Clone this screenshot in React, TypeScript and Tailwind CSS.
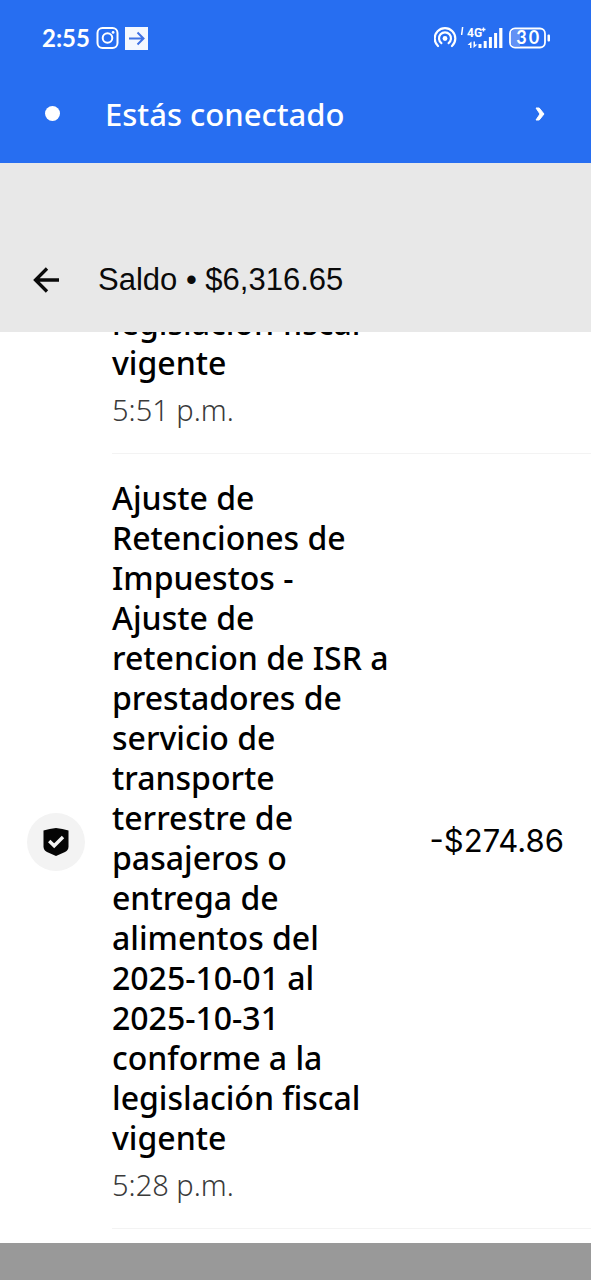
import React from "react";

interface Movement {
  id: string;
  description: string;
  time: string;
  amount?: string;
}

const movements: Movement[] = [
  { id: "a", description: "legislación fiscal\nvigente", time: "5:51 p.m." },
  {
    id: "b",
    description:
      "Ajuste de\nRetenciones de\nImpuestos -\nAjuste de\nretencion de ISR a\nprestadores de\nservicio de\ntransporte\nterrestre de\npasajeros o\nentrega de\nalimentos del\n2025-10-01 al\n2025-10-31\nconforme a la\nlegislación fiscal\nvigente",
    time: "5:28 p.m.",
    amount: "-$274.86",
  },
];

function InstagramIcon() {
  return (
    <svg viewBox="0 0 24 24" className="size-6" fill="none" stroke="currentColor" strokeWidth="2" aria-hidden="true">
      <rect x="1.5" y="2" width="20" height="20" rx="5" />
      <circle cx="11.5" cy="12" r="4.8" />
      <circle cx="17.1" cy="6.4" r="1.4" fill="currentColor" stroke="none" />
    </svg>
  );
}

function ArrowBadgeIcon() {
  return (
    <svg viewBox="0 0 23 23" className="size-[23px]" aria-hidden="true">
      <rect width="23" height="23" fill="#f4f8ff" />
      <path d="M4 11.5h14M12.5 5.5l6 6-6 6" fill="none" stroke="#3f72e4" strokeWidth="2" />
    </svg>
  );
}

function HotspotIcon() {
  return (
    <svg viewBox="0 0 24 24" className="size-6" fill="none" stroke="currentColor" strokeWidth="2.2" strokeLinecap="round" aria-hidden="true">
      <circle cx="11" cy="12.5" r="2.4" fill="currentColor" stroke="none" />
      <path d="M7.4 17.2a6 6 0 1 1 7.2 0" />
      <path d="M4 20a10.3 10.3 0 1 1 14 0" />
    </svg>
  );
}

function SignalIcon() {
  return (
    <svg viewBox="0 0 45 24" className="h-6 w-[45px]" fill="currentColor" aria-hidden="true">
      <path d="M1.6 1L0.6 9" stroke="currentColor" strokeWidth="1.5" />
      <text x="6" y="11" fontSize="12" fontWeight="700" fontFamily="'Liberation Sans Narrow', Roboto, sans-serif">4G</text>
      <path d="M20.5 3.5h4M22.5 1.5v4" stroke="currentColor" strokeWidth="1.4" />
      <path d="M10.5 15.5v6.5H9v-3H6.5zM12.5 22v-6.5H14v3h2.5z" />
      <rect x="17.5" y="18" width="3" height="4" />
      <rect x="22.7" y="15" width="3" height="7" />
      <rect x="27.9" y="11" width="3" height="11" />
      <rect x="33.1" y="7" width="3" height="15" />
      <rect x="38.2" y="2" width="3.2" height="20" />
    </svg>
  );
}

function BatteryIcon() {
  return (
    <svg viewBox="0 0 42 22" className="h-[22px] w-[42px]" aria-label="Batería 30">
      <rect x="1" y="1.5" width="35" height="19" rx="5" fill="#276ef1" stroke="white" strokeWidth="1.8" />
      <path d="M6 2.5h5v17H6a4 4 0 0 1-4-4v-9a4 4 0 0 1 4-4z" fill="#6291f5" />
      <rect x="38.5" y="7.5" width="2.5" height="7" rx="1" fill="white" />
      <text x="12.5" y="17" textAnchor="middle" fontSize="18" fontWeight="700" fontFamily="Lato, sans-serif" fill="white">3</text>
      <text x="25" y="17" textAnchor="middle" fontSize="18" fontWeight="700" fontFamily="Lato, sans-serif" fill="white">0</text>
    </svg>
  );
}

function ShieldIcon() {
  return (
    <svg viewBox="0 0 26 30" className="h-[30px] w-[26px]" aria-hidden="true">
      <path d="M0.5 3.5Q6.5 1.8 13 1Q19.5 1.8 25.5 3.5V19.5Q25.5 23 22 25L13 29L4 25Q0.5 23 0.5 19.5Z" fill="#050505" />
      <path d="M6.2 14l5 4.8 8.8-8.8" fill="none" stroke="#f3f3f3" strokeWidth="3.4" />
    </svg>
  );
}

function MovementRow({ item }: { item: Movement }) {
  return (
    <li className="flex shrink-0 items-center pl-[27px]">
      <div className="w-[85px] shrink-0">
        {item.amount && (
          <div className="flex size-[58px] items-center justify-center rounded-full bg-[#f3f3f3]">
            <ShieldIcon />
          </div>
        )}
      </div>
      <div className="flex flex-1 items-center justify-between border-b border-[#f3f3f3] pt-[24px] pb-[25px] pr-[27px]">
        <div>
          <p className="text-[32px] leading-[40px] font-medium whitespace-pre-line text-black">{item.description}</p>
          <p className="mt-[9px] text-[29px] leading-[36px] font-light text-[#3a3a3a]">{item.time}</p>
        </div>
        {item.amount && (
          <span className="text-[31px] leading-[40px] whitespace-nowrap text-black font-['Inter','Liberation_Sans',sans-serif]">{item.amount}</span>
        )}
      </div>
    </li>
  );
}

export default function App() {
  return (
    <div className="flex h-screen flex-col bg-white font-['Noto_Sans','Open_Sans',sans-serif]">
      <header className="shrink-0 bg-[#276ef1] text-white">
        <div className="flex h-[76px] items-center justify-between pr-10 pl-[42px]">
          <div className="flex items-center gap-[6px]">
            <span className="text-[24px] leading-8 font-bold font-['Lato',sans-serif]">2:55</span>
            <span className="flex items-center gap-[5px]">
              <InstagramIcon />
              <ArrowBadgeIcon />
            </span>
          </div>
          <div className="flex items-center gap-[3px]">
            <HotspotIcon />
            <SignalIcon />
            <BatteryIcon />
          </div>
        </div>
        <button type="button" className="flex h-[87px] w-full items-center pr-[46px] pb-3 pl-[45px] text-left">
          <span className="mr-[45px] size-[15px] rounded-full bg-white" />
          <span className="flex-1 text-[31px] leading-10 font-medium">Estás conectado</span>
          <svg viewBox="0 0 10 14" className="h-[14px] w-[10px]" aria-hidden="true">
            <path d="M1 1H4.2L9 7L4.2 13H1L5 7Z" fill="white" stroke="white" strokeWidth="1" strokeLinejoin="round" />
          </svg>
        </button>
      </header>
      <div className="flex h-[169px] shrink-0 items-end bg-[#e8e8e8] pb-8 pl-[33px]">
        <button type="button" aria-label="Volver" className="mr-[38px] flex h-10 items-center">
          <svg viewBox="0 0 27 26" className="h-[26px] w-[27px]" fill="none" stroke="#0a0a0a" strokeWidth="3.3" aria-hidden="true">
            <path d="M26 13H2.5M14 1.5L2.5 13L14 24.5" />
          </svg>
        </button>
        <h1 className="text-[31px] leading-10 text-[#0a0a0a] font-['Liberation_Sans',sans-serif]">Saldo • $6,316.65</h1>
      </div>
      <main className="flex min-h-0 flex-1 flex-col justify-end overflow-hidden pb-[14px]">
        <ul className="flex flex-col">
          {movements.map((item) => (
            <MovementRow key={item.id} item={item} />
          ))}
        </ul>
      </main>
      <footer className="h-[37px] shrink-0 bg-[#999999]" />
    </div>
  );
}
